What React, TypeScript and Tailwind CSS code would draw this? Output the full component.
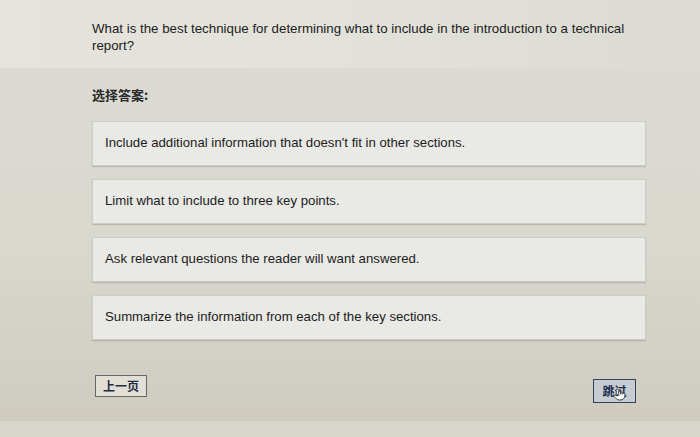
import { Pointer } from 'lucide-react';

const options = [
  "Include additional information that doesn't fit in other sections.",
  'Limit what to include to three key points.',
  'Ask relevant questions the reader will want answered.',
  'Summarize the information from each of the key sections.',
];

export default function App() {
  return (
    <div
      className="w-[700px] h-[437px] overflow-hidden flex flex-col text-[#1c1c1c]"
      style={{ fontFamily: '"Liberation Sans", Arial, "Noto Sans CJK SC", sans-serif' }}
    >
      <div className="h-[68px] shrink-0 bg-gradient-to-r from-[#e5e3db] via-[#e3e2da] to-[#dbdbd3] pl-[92px] pr-[60px] pt-[20px]">
        <p className="text-[13.3px] leading-[17px]">
          What is the best technique for determining what to include in the introduction to a technical report?
        </p>
      </div>

      <div className="flex-1 bg-gradient-to-b from-[#dcdbd3] via-[#d9d8cf] to-[#cfcbbf] pl-[92px] pr-[54px] pt-[17px] flex flex-col">
        <p className="text-[13px] font-bold text-[#2a2a2a] mb-[16px]" style={{ fontFamily: '"Noto Sans CJK SC", sans-serif' }}>
          选择答案:
        </p>
        <div className="flex flex-col gap-[13px]">
          {options.map((o) => (
            <div
              key={o}
              className="h-[45px] flex items-center px-[12px] bg-[#e9e9e5] border border-[#cdcdc8] shadow-[0_1px_1px_rgba(0,0,0,0.15)] text-[13.2px]"
            >
              {o}
            </div>
          ))}
        </div>

        <div className="mt-[35px] flex items-start justify-between pl-[3px] pr-[10px]">
          <button
            className="h-[22px] w-[52px] border border-[#666] bg-[#e2dfd6] text-[12px] font-bold text-[#1f2c44]"
            style={{ fontFamily: '"Noto Sans CJK SC", sans-serif' }}
          >
            上一页
          </button>
          <div className="relative mt-[4px]">
            <button
              className="h-[24px] w-[43px] border border-[#34425a] bg-[#c6ccd2] text-[12px] font-bold text-[#1f3050]"
              style={{ fontFamily: '"Noto Sans CJK SC", sans-serif' }}
            >
              跳过
            </button>
            <Pointer className="absolute left-[20px] top-[9px] w-[13px] h-[13px] text-[#333] fill-white" strokeWidth={1.6} />
          </div>
        </div>
      </div>

      <div className="h-[16px] shrink-0 bg-[#d9d6cc]" />
    </div>
  );
}
